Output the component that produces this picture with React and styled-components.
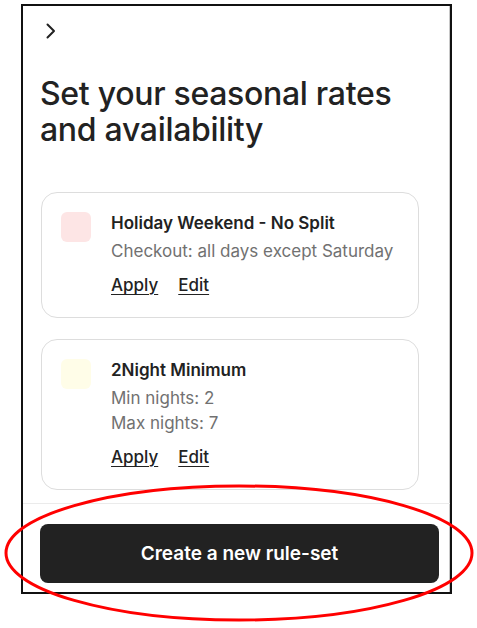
import React from "react";
import styled, { createGlobalStyle } from "styled-components";

const Global = createGlobalStyle`
  html, body { margin: 0; padding: 0; background: #fff; }
  body { font-family: Inter, "Noto Sans", "Liberation Sans", sans-serif; color: #222; }
  * { box-sizing: border-box; }
`;

const Page = styled.div`
  position: relative;
  width: 477px;
  height: 628px;
  padding: 4px 0 0 21px;
`;

const Frame = styled.div`
  width: 431px;
  height: 590px;
  border: 2px solid #111;
  box-shadow: inset -1px 0 0 #c8c8c8;
  display: flex;
  flex-direction: column;
  background: #fff;
`;

const Scroll = styled.div`
  flex: 1;
  overflow: hidden;
  padding: 0 0 0 17px;
`;

const Header = styled.div`
  padding: 17px 0 0 3px;
  height: 33px;
  display: flex;
`;

const Heading = styled.h1`
  margin: 37px 0 0;
  font-size: 32px;
  line-height: 36px;
  font-weight: 500;
  color: #222;
  letter-spacing: -0.3px;
`;

const Cards = styled.div`
  margin-top: 44px;
  padding-left: 1px;
  display: flex;
  flex-direction: column;
  gap: 21px;
`;

const Card = styled.div`
  width: 378px;
  border: 1px solid #dddddd;
  border-radius: 16px;
  padding: 19px;
  display: flex;
  gap: 20px;
`;

const Swatch = styled.div`
  width: 30px;
  height: 30px;
  border-radius: 6px;
  background: ${(p) => p.$color};
  flex: none;
`;

const Body = styled.div`
  display: flex;
  flex-direction: column;
`;

const Title = styled.div`
  font-size: 17px;
  line-height: 22px;
  font-weight: 600;
  color: #222;
`;

const Details = styled.div`
  margin-top: 5px;
  font-size: 17px;
  line-height: 25px;
  color: #717171;
`;

const Actions = styled.div`
  margin-top: 9px;
  display: flex;
  gap: 20px;
  font-size: 17px;
  line-height: 25px;
`;

const LinkButton = styled.a`
  color: #222;
  font-weight: 500;
  text-decoration: underline;
  text-underline-offset: 3px;
  cursor: pointer;
`;

const Footer = styled.div`
  border-top: 1px solid #ebebeb;
  padding: 20px 0 9px 17px;
`;

const PrimaryButton = styled.button`
  width: 399px;
  height: 59px;
  border: none;
  border-radius: 8px;
  background: #222222;
  color: #fff;
  font-family: inherit;
  font-size: 19px;
  font-weight: 600;
  cursor: pointer;
`;

const Annotation = styled.svg`
  position: absolute;
  left: 0;
  top: 0;
  pointer-events: none;
`;

const rules = [
  {
    id: 1,
    color: "#fde5e5",
    title: "Holiday Weekend - No Split",
    details: ["Checkout: all days except Saturday"],
  },
  {
    id: 2,
    color: "#fffde8",
    title: "2Night Minimum",
    details: ["Min nights: 2", "Max nights: 7"],
  },
];

export default function App() {
  return (
    <>
      <Global />
      <Page>
        <Frame>
          <Scroll>
            <Header>
              <svg width="16" height="16" viewBox="0 0 16 16" fill="none">
                <path d="M4.5 1.5 L11 8 L4.5 14.5" stroke="#222" strokeWidth="2" strokeLinecap="round" strokeLinejoin="round" />
              </svg>
            </Header>
            <Heading>Set your seasonal rates and availability</Heading>
            <Cards>
              {rules.map((r) => (
                <Card key={r.id}>
                  <Swatch $color={r.color} />
                  <Body>
                    <Title>{r.title}</Title>
                    <Details>
                      {r.details.map((d) => (
                        <div key={d}>{d}</div>
                      ))}
                    </Details>
                    <Actions>
                      <LinkButton>Apply</LinkButton>
                      <LinkButton>Edit</LinkButton>
                    </Actions>
                  </Body>
                </Card>
              ))}
            </Cards>
          </Scroll>
          <Footer>
            <PrimaryButton>Create a new rule-set</PrimaryButton>
          </Footer>
        </Frame>
        <Annotation width="477" height="628" viewBox="0 0 477 628">
          <ellipse cx="239" cy="553" rx="233" ry="67" fill="none" stroke="#ff0000" strokeWidth="3" />
        </Annotation>
      </Page>
    </>
  );
}
